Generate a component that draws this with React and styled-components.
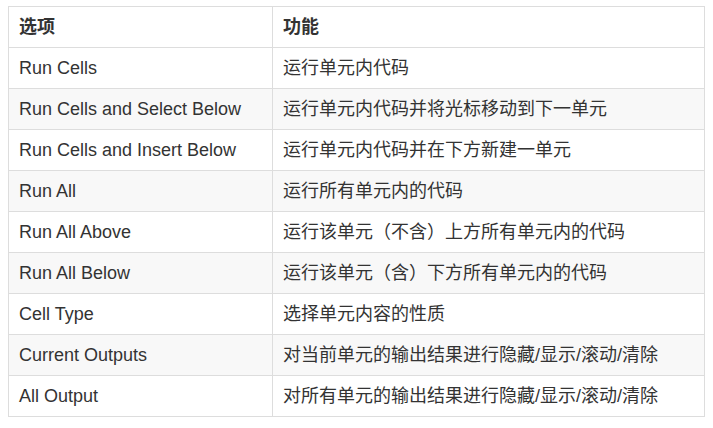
import React from 'react'
import styled, { createGlobalStyle } from 'styled-components'

const GlobalStyle = createGlobalStyle`
    body {
        margin: 0;
        background: #fff;
        font-family: "Liberation Sans", Arial, "Noto Sans CJK SC", sans-serif;
        color: #333;
    }
`

const Page = styled.div`
    padding: 6px 8px;
`

const Table = styled.table`
    width: 697px;
    border-collapse: collapse;
    border-spacing: 0;
    font-size: 18px;
    line-height: 24px;
`

const Row = styled.tr`
    background: ${({ $striped }) => ($striped ? '#f8f8f8' : '#fff')};
`

const HeadCell = styled.th`
    text-align: left;
    font-weight: 700;
    padding: 8px 10px;
    border: 1px solid #ddd;
    width: ${({ $w }) => $w || 'auto'};
`

const Cell = styled.td`
    padding: 8px 10px;
    border: 1px solid #ddd;
`

const rows = [
    ['Run Cells', '运行单元内代码'],
    ['Run Cells and Select Below', '运行单元内代码并将光标移动到下一单元'],
    ['Run Cells and Insert Below', '运行单元内代码并在下方新建一单元'],
    ['Run All', '运行所有单元内的代码'],
    ['Run All Above', '运行该单元（不含）上方所有单元内的代码'],
    ['Run All Below', '运行该单元（含）下方所有单元内的代码'],
    ['Cell Type', '选择单元内容的性质'],
    ['Current Outputs', '对当前单元的输出结果进行隐藏/显示/滚动/清除'],
    ['All Output', '对所有单元的输出结果进行隐藏/显示/滚动/清除'],
]

const App = () => {
    return (
        <Page>
            <GlobalStyle />
            <Table>
                <thead>
                    <Row>
                        <HeadCell $w="243px">选项</HeadCell>
                        <HeadCell>功能</HeadCell>
                    </Row>
                </thead>
                <tbody>
                    {rows.map(([opt, desc], i) => (
                        <Row key={opt} $striped={i % 2 === 1}>
                            <Cell>{opt}</Cell>
                            <Cell>{desc}</Cell>
                        </Row>
                    ))}
                </tbody>
            </Table>
        </Page>
    )
}

export default App
